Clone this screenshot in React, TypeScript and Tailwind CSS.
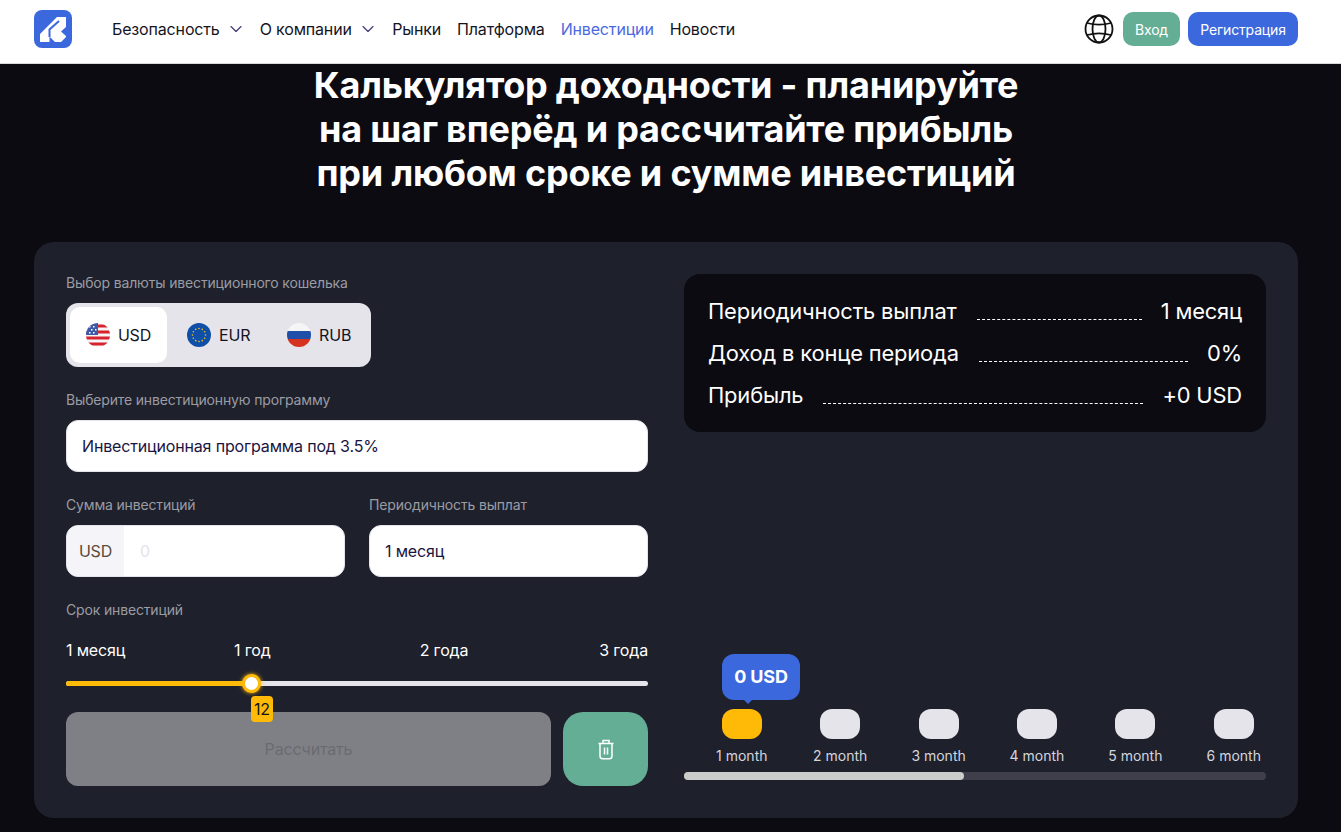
import React from 'react';
import { ChevronDown } from 'lucide-react';

const months = ['1 month', '2 month', '3 month', '4 month', '5 month', '6 month'];

function Logo() {
  return (
    <svg width="38" height="38" viewBox="0 0 38 38">
      <rect width="38" height="38" rx="8" fill="#3b68dd" />
      <path d="M6 24 L23 7 H32 V17 L27 21.5 L32 26 V27 L27 32 H21 L15.5 26.5 V32 H6 Z" fill="#fff" />
      <path d="M15.5 27 V19.5 L25 11" fill="none" stroke="#3b68dd" strokeWidth="2" />
    </svg>
  );
}

function Globe() {
  return (
    <svg width="30" height="30" viewBox="0 0 30 30" fill="none" stroke="#111" strokeWidth="1.8">
      <circle cx="15" cy="15" r="13.5" />
      <ellipse cx="15" cy="15" rx="6.5" ry="13.5" />
      <path d="M3 9C10 11 20 11 27 9M3 21C10 19 20 19 27 21" />
    </svg>
  );
}

function UsFlag() {
  return (
    <svg width="24" height="24" viewBox="0 0 24 24">
      <defs>
        <clipPath id="us"><circle cx="12" cy="12" r="12" /></clipPath>
      </defs>
      <g clipPath="url(#us)">
        <rect width="24" height="24" fill="#f5f5f5" />
        <path d="M0 1.5H24V4.5H0ZM0 7.5H24V10.5H0ZM0 13.5H24V16.5H0ZM0 19.5H24V22.5H0Z" fill="#d8232f" />
        <rect width="12" height="12" fill="#3b5aa8" />
        <path d="M3 3h1.5v1.5H3zM7 3h1.5v1.5H7zM5 6h1.5v1.5H5zM9 6h1.5v1.5H9zM3 9h1.5v1.5H3zM7 9h1.5v1.5H7z" fill="#fff" />
      </g>
    </svg>
  );
}

function EuFlag() {
  const stars = Array.from({ length: 12 }, (_, i) => i * 30);
  return (
    <svg width="24" height="24" viewBox="0 0 24 24">
      <circle cx="12" cy="12" r="12" fill="#0f4fa8" />
      {stars.map((deg) => (
        <circle
          key={deg}
          cx={12 + 6.5 * Math.cos((deg * Math.PI) / 180)}
          cy={12 + 6.5 * Math.sin((deg * Math.PI) / 180)}
          r="0.8"
          fill="#f5c518"
        />
      ))}
    </svg>
  );
}

function RuFlag() {
  return (
    <svg width="24" height="24" viewBox="0 0 24 24">
      <defs>
        <clipPath id="ru"><circle cx="12" cy="12" r="12" /></clipPath>
      </defs>
      <g clipPath="url(#ru)">
        <rect width="24" height="8" fill="#f5f5f5" />
        <rect y="8" width="24" height="8" fill="#1f4fa8" />
        <rect y="16" width="24" height="8" fill="#d5321f" />
      </g>
    </svg>
  );
}

function TrashIcon() {
  return (
    <svg width="16" height="21" viewBox="0 0 16 21" fill="none" stroke="#fff" strokeWidth="1.5">
      <path d="M0.5 4.5H15.5M5 4.5V1.5H11V4.5M2 4.5V17C2 18.8 3 19.8 4.8 19.8H11.2C13 19.8 14 18.8 14 17V4.5M6.5 8.5V15.5M9.5 8.5V15.5" />
    </svg>
  );
}

function InfoRow({ label, value }: { label: string; value: string }) {
  return (
    <div className="flex items-center h-[42px] text-[21.9px] text-white">
      <span>{label}</span>
      <div className="flex-1 ml-5 mr-[19px] mt-[16px] border-b border-dashed border-white" />
      <span>{value}</span>
    </div>
  );
}

function Field({ label, children }: { label: string; children: React.ReactNode }) {
  return (
    <div>
      <p className="text-[14px] leading-[17px] text-[#9b9ca3] mb-3">{label}</p>
      {children}
    </div>
  );
}

export default function App() {
  return (
    <div className="min-h-[832px] bg-[#0c0b11] font-['Inter',sans-serif] tracking-[-0.01em] overflow-hidden">
      <header className="h-16 bg-white border-b border-[#d9d9d9] flex items-center pb-[5px] pl-[34px] pr-[43px]">
        <Logo />
        <nav className="flex items-center ml-10 text-[16px] text-[#14141f]">
          <span>Безопасность</span>
          <ChevronDown className="ml-[6px] mr-[14px] text-[#3b3470]" size={20} strokeWidth={1.3} />
          <span>О компании</span>
          <ChevronDown className="ml-[6px] mr-[14.5px] text-[#3b3470]" size={20} strokeWidth={1.3} />
          <span>Рынки</span>
          <span className="ml-4">Платформа</span>
          <span className="ml-4 text-[#4a6adf]">Инвестиции</span>
          <span className="ml-4">Новости</span>
        </nav>
        <div className="ml-auto flex items-center">
          <Globe />
          <button className="ml-[9px] h-[34px] w-[57px] rounded-[10px] bg-[#65ae96] text-white text-[14px]">Вход</button>
          <button className="ml-2 h-[34px] w-[110px] rounded-[10px] bg-[#3b68dd] text-white text-[14px]">Регистрация</button>
        </div>
      </header>

      <h1 className="mr-[9px] text-center text-white font-bold text-[36px] tracking-[-0.2px] leading-[44px] -mt-px">
        Калькулятор доходности - планируйте
        <br />
        на шаг вперёд и рассчитайте прибыль
        <br />
        при любом сроке и сумме инвестиций
      </h1>

      <section className="ml-[34px] mr-[43px] mt-[47px] h-[576px] rounded-[20px] bg-[#1e202c] p-8 grid grid-cols-2 gap-9">
        <div className="flex flex-col">
          <Field label="Выбор валюты ивестиционного кошелька">
            <div className="h-16 w-[305px] rounded-xl bg-[#e4e4ea] p-1 flex text-[16px] text-[#14141f]">
              <div className="w-[97px] rounded-[10px] bg-white flex items-center justify-center gap-2">
                <UsFlag />USD
              </div>
              <div className="w-[100px] pl-5 flex items-center gap-2">
                <EuFlag />EUR
              </div>
              <div className="w-[100px] pl-5 flex items-center gap-2">
                <RuFlag />RUB
              </div>
            </div>
          </Field>

          <div className="mt-6">
            <Field label="Выберите инвестиционную программу">
              <div className="h-[52px] rounded-xl bg-white border border-[#e4e4ea] flex items-center px-[15px] text-[16px] text-[#1a1440]">
                Инвестиционная программа под 3.5%
              </div>
            </Field>
          </div>

          <div className="mt-6 grid grid-cols-2 gap-6">
            <Field label="Сумма инвестиций">
              <div className="h-[52px] rounded-xl bg-white border border-[#e4e4ea] flex overflow-hidden text-[16px]">
                <div className="w-[57px] pb-px bg-[#f4f4f9] flex items-center justify-center text-[#5a4a3a]">USD</div>
                <div className="flex items-center pb-px pl-4 text-[#e4e4ea]">0</div>
              </div>
            </Field>
            <Field label="Периодичность выплат">
              <div className="h-[52px] rounded-xl bg-white border border-[#e4e4ea] flex items-center px-[15px] text-[16px] text-[#1a1440]">
                1 месяц
              </div>
            </Field>
          </div>

          <p className="mt-6 text-[14px] leading-[17px] text-[#9b9ca3]">Срок инвестиций</p>

          <div className="mt-[23px] flex text-[16px] leading-[18px] text-white">
            <span>1 месяц</span>
            <span className="ml-[109px]">1 год</span>
            <span className="ml-[149px]">2 года</span>
            <span className="ml-auto">3 года</span>
          </div>

          <div className="relative mt-[22px] h-[5px] rounded-full bg-[#e4e4ea]">
            <div className="h-full w-[186px] rounded-full bg-[#ffba08]" />
            <div className="absolute left-[176px] top-[-7px] w-[19px] h-[19px] rounded-full bg-white border-[3px] border-[#ffba08] shadow-[0_0_4px_#ffba08]" />
            <div className="absolute left-[185px] top-[15px] z-10 w-[22px] h-[26px] rounded bg-[#ffba08] flex items-center justify-center text-[16px] text-[#14141f]">12</div>
          </div>

          <div className="mt-[26px] flex gap-3">
            <button className="h-[74px] flex-1 rounded-xl bg-[#7f8085] text-[16px] text-[#6a6b70]">Рассчитать</button>
            <button className="h-[74px] w-[85px] rounded-[20px] bg-[#65ae96] flex items-center justify-center">
              <TrashIcon />
            </button>
          </div>
        </div>

        <div className="flex flex-col">
          <div className="h-[158px] rounded-2xl bg-[#0c0b11] px-6 py-4">
            <InfoRow label="Периодичность выплат" value="1 месяц" />
            <InfoRow label="Доход в конце периода" value="0%" />
            <InfoRow label="Прибыль" value="+0 USD" />
          </div>

          <div className="mt-auto mb-[6px]">
            <div className="relative flex pl-[8.6px]">
              {months.map((m, i) => (
                <div key={m} className="w-[98.4px] flex-none flex flex-col items-center">
                  <div className={`w-10 h-[30px] rounded-xl ${i === 0 ? 'bg-[#ffba08]' : 'bg-[#e4e4ea]'}`} />
                  <span className="mt-[8px] text-[14px] tracking-normal leading-[17px] text-[#d4d5dc]">{m}</span>
                </div>
              ))}
              <div className="absolute left-[38px] top-[-55px] w-[78px] h-[46px] pb-px rounded-xl bg-[#3b68dd] flex items-center justify-center text-[18px] font-bold text-white">
                0 USD
                <div className="absolute left-[21px] bottom-[-4px] w-0 h-0 border-l-[5px] border-r-[5px] border-t-[5px] border-l-transparent border-r-transparent border-t-[#3b68dd]" />
              </div>
            </div>
            <div className="mt-[8px] h-2 rounded-full bg-[#3e3f4a]">
              <div className="h-full w-[280px] rounded-full bg-[#cccccc]" />
            </div>
          </div>
        </div>
      </section>
    </div>
  );
}
